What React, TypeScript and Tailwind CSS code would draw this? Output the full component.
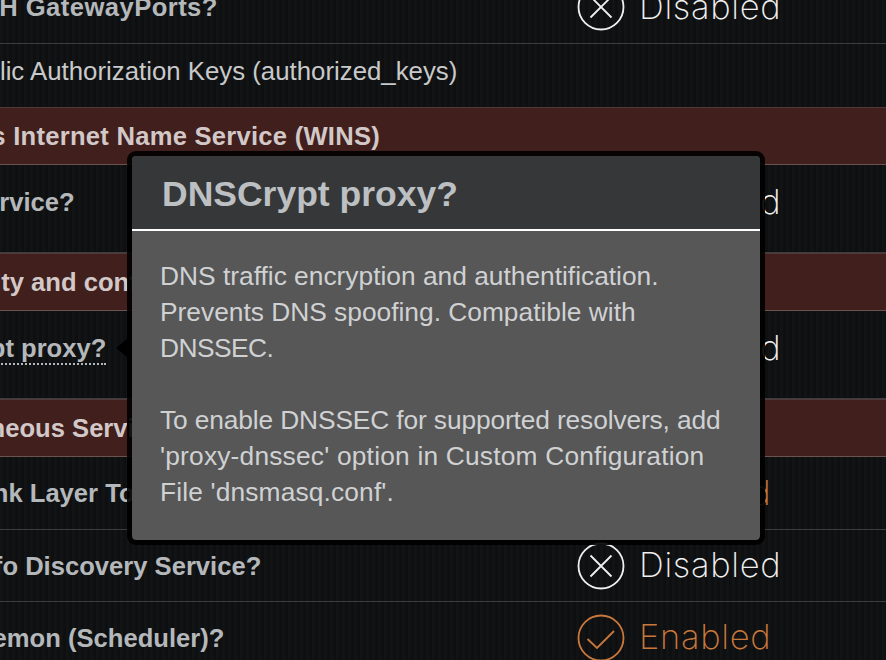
/**
 * Router settings table behind the "DNSCrypt proxy?" help popup
 */
const sans = 'font-["Liberation_Sans",Arial,sans-serif]'

function StatusBadge({ on }: { on: boolean }) {
  const color = on ? 'text-[#c9783c]' : 'text-[#f0f0f0]'
  return (
    <div className={`flex items-center gap-[14px] ${color}`}>
      <svg width="48" height="48" viewBox="0 0 48 48" fill="none" stroke="currentColor" strokeWidth="1.8" className="shrink-0">
        <circle cx="24" cy="24" r="22.5" />
        {on ? <path d="M10.5 25 L20 34 L37 17" /> : <path d="M13.5 13.5 L34.5 34.5 M34.5 13.5 L13.5 34.5" />}
      </svg>
      <span className='font-["Inter",sans-serif] text-[34.5px] leading-none font-extralight tracking-[0.7px]'>
        {on ? 'Enabled' : 'Disabled'}
      </span>
    </div>
  )
}

function Row({ label, offset, heightClass, on, underline, labelAlign, valueAlign }: {
  label: string
  offset: string
  heightClass: string
  on: boolean
  underline?: boolean
  labelAlign: string
  valueAlign: string
}) {
  return (
    <div className={`flex ${heightClass} border-b border-[#3d3d3d]`}>
      <div className={`w-[547px] shrink-0 overflow-hidden flex ${labelAlign}`}>
        <span className={`${offset} whitespace-nowrap text-[25.6px] font-bold leading-[30px] text-[#b4b8bb] ${underline ? 'h-[32px] border-b-2 border-dotted border-[#b4b8bb]' : ''}`}>
          {label}
        </span>
      </div>
      <div className={`flex-1 flex pl-[30px] ${valueAlign}`}>
        <StatusBadge on={on} />
      </div>
    </div>
  )
}

function Section({ label, offset }: { label: string; offset: string }) {
  return (
    <div className="h-[58px] flex items-center overflow-hidden bg-[#401f1c] border-t border-t-[#52383a] border-b border-b-[#6e5250]">
      <span className={`${offset} whitespace-nowrap text-[25.6px] font-bold leading-[30px] text-[#d3c8c8]`}>{label}</span>
    </div>
  )
}

export default function App() {
  return (
    <div className={`relative h-[660px] w-[886px] overflow-hidden bg-[#101112] ${sans}`}>
      <div className="-mt-[29px] bg-[repeating-linear-gradient(90deg,#121314_0px,#121314_3px,#0e0f10_3px,#0e0f10_6px)]">
        <Row label="Enable SSH GatewayPorts?" offset="-ml-[130px] tracking-[0.45px]" heightClass="h-[73px]" on={false} labelAlign="items-center" valueAlign="items-center" />
        <div className="h-[63px] pb-[9px] flex items-center overflow-hidden">
          <span className="-ml-[46px] whitespace-nowrap text-[25.8px] leading-[30px] text-[#c8c9ca]">Public Authorization Keys (authorized_keys)</span>
        </div>
        <Section label="Windows Internet Name Service (WINS)" offset="-ml-[108px] tracking-[0.25px]" />
        <Row label="Enable WINS Service?" offset="-ml-[197px]" heightClass="h-[88px]" on={false} labelAlign="items-start pt-[22px]" valueAlign="items-start pt-[13px]" />
        <Section label="Security and configuration" offset="-ml-[77px]" />
        <Row label="Enable DNSCrypt proxy?" offset="-ml-[198px]" underline heightClass="h-[88px]" on={false} labelAlign="items-start pt-[22px]" valueAlign="items-start pt-[13px]" />
        <Section label="Miscellaneous Services" offset="-ml-[110px]" />
        <Row label="Enable Link Layer Topology Discovery?" offset="-ml-[121px]" heightClass="h-[73px]" on labelAlign="items-center" valueAlign="items-center" />
        <Row label="Enable Network Info Discovery Service?" offset="-ml-[228px]" heightClass="h-[72px]" on={false} labelAlign="items-center" valueAlign="items-center" />
        <Row label="Enable Cron Daemon (Scheduler)?" offset="-ml-[198px]" heightClass="h-[72px]" on labelAlign="items-center" valueAlign="items-center" />
      </div>

      {/* popup arrow, points at the hovered label */}
      <div className="absolute left-[116px] top-[339px] h-0 w-0 border-y-[9px] border-r-[11px] border-y-transparent border-r-black" />

      {/* help popup */}
      <div className="absolute left-[127px] top-[151px] w-[638px] h-[394px] rounded-[9px] border-[5px] border-black/90 bg-[#575757] bg-clip-padding overflow-hidden">
        <div className="h-[68px] flex items-center pl-[30px] pt-[5px] bg-[#363738] border-b-2 border-white box-content">
          <span className="text-[35.5px] font-bold text-[#bcc0c3] leading-none">DNSCrypt proxy?</span>
        </div>
        <div className="pl-[28px] pt-[27px] text-[26.33px] leading-[36px] text-[#cfd1d3]">
          <p>DNS traffic encryption and authentification.</p>
          <p>Prevents DNS spoofing. Compatible with</p>
          <p className="tracking-[-0.55px]">DNSSEC.</p>
          <p className="mt-[36px] tracking-[-0.13px]">To enable DNSSEC for supported resolvers, add</p>
          <p className="tracking-[0.2px]">'proxy-dnssec' option in Custom Configuration</p>
          <p className="tracking-[0.15px]">File 'dnsmasq.conf'.</p>
        </div>
      </div>
    </div>
  )
}
